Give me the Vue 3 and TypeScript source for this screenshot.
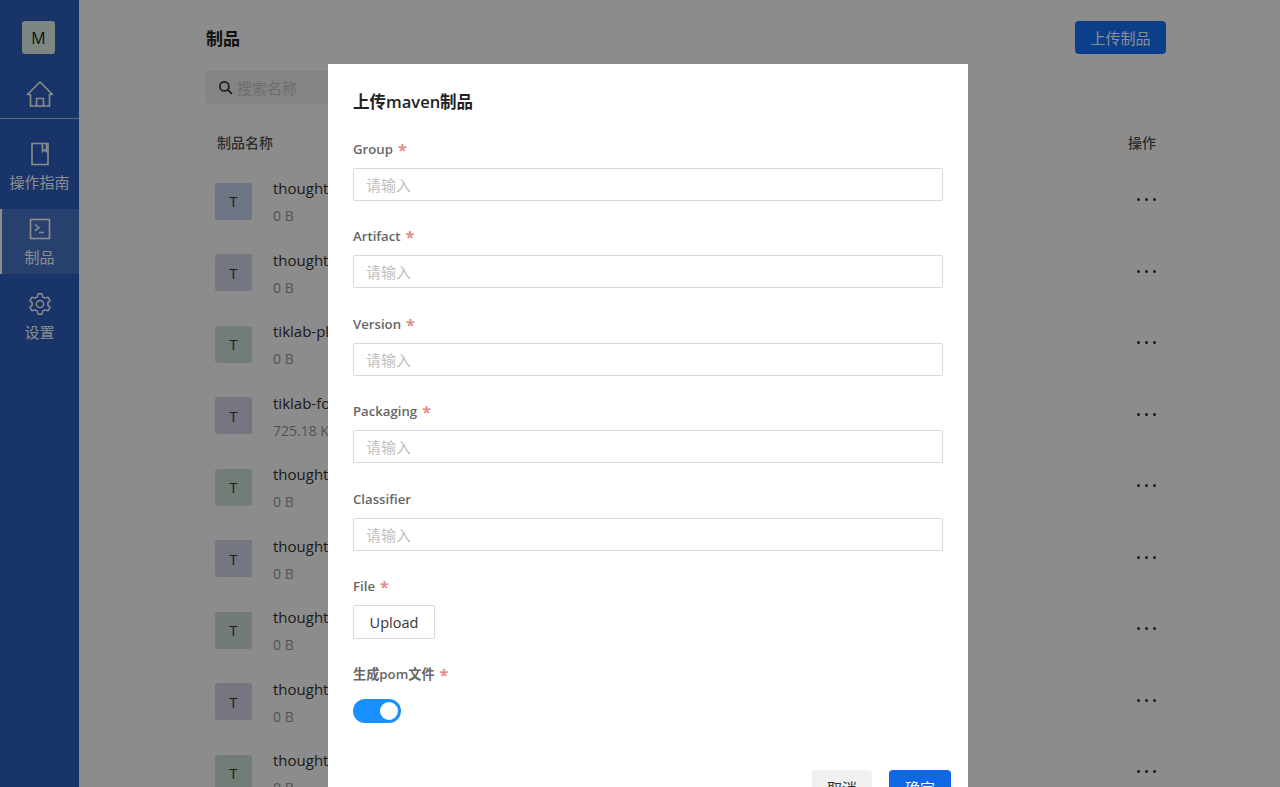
<script setup lang="ts">
const rows = [
  { name: 'thoughtwork', size: '0 B', color: '#c6d6f2' },
  { name: 'thoughtwork', size: '0 B', color: '#d3d8ea' },
  { name: 'tiklab-plugin', size: '0 B', color: '#cfe3df' },
  { name: 'tiklab-form', size: '725.18 KB', color: '#d6d6e8' },
  { name: 'thoughtwork', size: '0 B', color: '#cfe3da' },
  { name: 'thoughtwork', size: '0 B', color: '#d3d8ea' },
  { name: 'thoughtwork', size: '0 B', color: '#cfe0da' },
  { name: 'thoughtwork', size: '0 B', color: '#d6d8e8' },
  { name: 'thoughtwork', size: '0 B', color: '#cfe3da' },
]
const fields = [
  { label: 'Group', required: true },
  { label: 'Artifact', required: true },
  { label: 'Version', required: true },
  { label: 'Packaging', required: true },
  { label: 'Classifier', required: false },
]
</script>

<template>
  <div class="page">
    <aside class="side">
      <div class="logo">M</div>
      <div class="home">
        <svg width="28" height="28" viewBox="0 0 28 28" fill="none" stroke="currentColor" stroke-width="1.6" stroke-linejoin="round" stroke-linecap="round">
          <path d="M1.500 14.500 14 2l12.500 12.500h-3" />
          <path d="M1.500 14.500h3V26h19V14.500" />
          <path d="M10.500 26v-7.500h7V26" />
        </svg>
      </div>
      <div class="nav first">
        <svg width="24" height="24" viewBox="0 0 24 24" fill="none" stroke="currentColor" stroke-width="1.6">
          <path d="M4 1.500h16v21H4z" />
          <path d="M14.500 1.500v8l2-1.600 2 1.600v-8" />
        </svg>
        <span>操作指南</span>
      </div>
      <div class="nav active">
        <svg width="24" height="24" viewBox="0 0 24 24" fill="none" stroke="currentColor" stroke-width="1.6">
          <rect x="2.500" y="2.500" width="19" height="19" />
          <path d="m7 7.500 3.800 3.200L7 13.900M11 15.500h5" />
        </svg>
        <span>制品</span>
      </div>
      <div class="nav">
        <svg width="24" height="24" viewBox="0 0 24 24" fill="none" stroke="currentColor" stroke-width="1.500" stroke-linejoin="round">
          <circle cx="12" cy="12" r="3.600" />
          <path d="M10 1.800h4l.7 3 2.300 1.300 3-.9 2 3.500-2.200 2.100v2.400l2.200 2.100-2 3.500-3-.9-2.300 1.300-.7 3h-4l-.7-3L7 17.900l-3 .9-2-3.500 2.200-2.100v-2.400L2 8.700l2-3.500 3 .9 2.300-1.300z" />
        </svg>
        <span>设置</span>
      </div>
    </aside>

    <main class="main">
      <div class="head">
        <h1>制品</h1>
        <button class="primary" type="button">上传制品</button>
      </div>
      <div class="search">
        <svg width="15" height="15" viewBox="0 0 16 16" fill="none" stroke="currentColor" stroke-width="1.800">
          <circle cx="6.800" cy="6.800" r="4.800" />
          <path d="m10.300 10.300 4.500 4.500" />
        </svg>
        <span>搜索名称</span>
      </div>
      <div class="thead">
        <span>制品名称</span>
        <span>操作</span>
      </div>
      <div v-for="(r, i) in rows" :key="i" class="row">
        <div class="avatar" :style="{ background: r.color }">T</div>
        <div class="info">
          <div class="name">{{ r.name }}</div>
          <div class="size">{{ r.size }}</div>
        </div>
        <div class="dots">
          <i></i><i></i><i></i>
        </div>
      </div>
    </main>

    <div class="mask">
      <section class="modal">
        <h2>上传maven制品</h2>
        <div v-for="f in fields" :key="f.label" class="field">
          <label>{{ f.label }}<em v-if="f.required">*</em></label>
          <input type="text" placeholder="请输入" />
        </div>
        <div class="field">
          <label>File<em>*</em></label>
          <button class="upload" type="button">Upload</button>
        </div>
        <div class="field">
          <label>生成pom文件<em>*</em></label>
          <div class="switch"><b></b></div>
        </div>
        <div class="foot">
          <button class="cancel" type="button">取消</button>
          <button class="ok" type="button">确定</button>
        </div>
      </section>
    </div>
  </div>
</template>

<style scoped>
.page {
  position: relative;
  display: flex;
  height: 787px;
  overflow: hidden;
  background: #fff;
  color: #1f1f1f;
  font-family: "Open Sans", "Noto Sans CJK SC", sans-serif;
  font-size: 14px;
}
.side {
  flex: 0 0 79px;
  display: flex;
  flex-direction: column;
  align-items: stretch;
  background: #2d60c0;
  color: #fff;
}
.logo {
  width: 33px;
  height: 33px;
  margin: 21px 0 0 22px;
  display: flex;
  align-items: center;
  justify-content: center;
  border-radius: 3px;
  background: #e3f5ea;
  color: #222;
  font-size: 16px;
}
.home {
  height: 48px;
  padding-top: 16px;
  display: flex;
  align-items: center;
  justify-content: center;
  border-bottom: 1px solid rgba(255, 255, 255, 0.6);
}
.nav {
  height: 65px;
  margin-top: 10px;
  padding-top: 8px;
  box-sizing: border-box;
  display: flex;
  flex-direction: column;
  align-items: center;
  gap: 6px;
  font-size: 15px;
  line-height: 20px;
  white-space: nowrap;
}
.nav.first { margin-top: 15px; }
.nav.active {
  background: rgba(255, 255, 255, 0.14);
  box-shadow: inset 2px 0 0 #fff;
}
.main {
  flex: 1;
  padding: 21px 114px 0 127px;
  min-width: 0;
}
.head {
  display: flex;
  align-items: center;
  justify-content: space-between;
  height: 33px;
}
h1 {
  margin: -1px 0 0;
  font-size: 17px;
  font-weight: 600;
}
.primary {
  width: 91px;
  height: 33px;
  padding: 0;
  border: 0;
  border-radius: 4px;
  background: #1474fb;
  color: #fff;
  font: inherit;
  font-size: 15px;
}
.search {
  margin-top: 17px;
  width: 300px;
  height: 33px;
  display: flex;
  align-items: center;
  gap: 4px;
  padding-left: 12px;
  box-sizing: border-box;
  border-radius: 3px;
  background: #f0f0f0;
  color: #333;
  font-size: 15px;
}
.search span { color: #c8c8c8; }
.thead {
  display: flex;
  justify-content: space-between;
  height: 40px;
  margin: 18px 0 2px;
  padding: 0 10px 0 11px;
  align-items: center;
  color: #555;
  font-size: 14px;
  font-weight: 500;
}
.row {
  display: flex;
  align-items: center;
  height: 71.5px;
  padding: 0 10px 0 9px;
}
.avatar {
  flex: 0 0 37px;
  height: 37px;
  margin-top: 3px;
  display: flex;
  align-items: center;
  justify-content: center;
  border-radius: 3px;
  font-size: 15px;
  color: #333;
}
.info {
  flex: 1;
  margin-left: 21px;
  margin-top: 5px;
  line-height: 20px;
  white-space: nowrap;
}
.name { color: #333; font-size: 15px; }
.size { margin-top: 8px; color: #999; }
.dots {
  display: flex;
  gap: 5px;
}
.dots i {
  width: 3px;
  height: 3px;
  border-radius: 50%;
  background: #333;
}
.mask {
  position: absolute;
  inset: 0;
  display: flex;
  justify-content: center;
  align-items: flex-start;
  padding-left: 16px;
  background: rgba(0, 0, 0, 0.45);
}
.modal {
  flex: 0 0 640px;
  margin-top: 64px;
  padding: 26px 25px 40px;
  box-sizing: border-box;
  background: #fff;
  color: #222;
}
h2 {
  margin: 0 0 22.700px;
  font-size: 16.500px;
  line-height: 24px;
  font-weight: 600;
}
.field {
  height: 87.500px;
}
label {
  display: block;
  height: 22px;
  margin-bottom: 9px;
  font-size: 13.200px;
  line-height: 24px;
  font-weight: 600;
  color: #666;
}
label em {
  margin-left: 5px;
  font-style: normal;
  font-weight: 700;
  font-size: 16px;
  vertical-align: -2px;
  color: #e58a86;
}
input {
  display: block;
  width: 100%;
  height: 33px;
  padding: 1px 12px 0;
  box-sizing: border-box;
  border: 1px solid #d9d9d9;
  border-radius: 2px;
  outline: 0;
  font: inherit;
  font-size: 15px;
}
input::placeholder { color: #bfbfbf; }
.upload {
  display: block;
  width: 82px;
  height: 34px;
  padding: 0;
  border: 1px solid #d9d9d9;
  border-radius: 2px;
  background: #fff;
  color: #333;
  font: inherit;
  font-size: 14.500px;
}
.switch {
  position: relative;
  width: 48px;
  height: 24px;
  margin-top: 15px;
  border-radius: 12px;
  background: #1890ff;
}
.switch b {
  position: absolute;
  top: 3px;
  right: 3px;
  width: 18px;
  height: 18px;
  border-radius: 50%;
  background: #fff;
}
.foot {
  display: flex;
  justify-content: flex-end;
  gap: 17px;
  margin-top: 21px;
  margin-right: -8px;
}
.foot button {
  height: 34px;
  border: 0;
  border-radius: 4px;
  padding: 0;
  font: inherit;
  font-size: 15px;
}
.cancel { width: 60px; background: #f0f0f0; color: #333; }
.ok { width: 62px; background: #0f67e6; color: #fff; font-weight: 600; }
</style>

<style>
html, body { margin: 0; height: 100%; overflow: hidden; }
</style>
